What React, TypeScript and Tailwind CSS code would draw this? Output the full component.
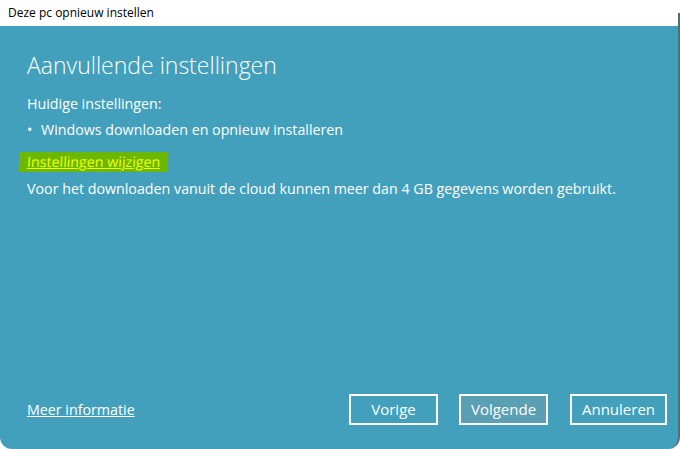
const font = { fontFamily: '"Open Sans", "Noto Sans", sans-serif' };

const Button = ({ label, width, active }: { label: string; width: string; active?: boolean }) => (
    <button
        className={`h-[31px] border-2 border-white text-[15px] text-white ${width} ${active ? "bg-[#5b9fb3]" : "bg-transparent"}`}
    >
        {label}
    </button>
);

export default function App() {
    return (
        <div className="relative h-[449px] w-[680px] overflow-hidden bg-white" style={font}>
            <div className="flex h-[26px] items-center pl-[8px] text-[12px] text-black">Deze pc opnieuw instellen</div>
            {/* thin window edge on the right */}
            <div className="absolute right-0 top-[13px] h-[13px] w-[2px] bg-[#4f6f78]" />
            <div className="flex h-[423px] w-[680px] flex-col rounded-b-[12px] border-r-2 border-[#4f6f78] bg-[#42a0bd] pb-[24px] pl-[27px] pr-[11px] text-white">
                <h1 className="mt-[23px] text-[23px] font-light leading-[32px]">Aanvullende instellingen</h1>
                <p className="mt-[13px] text-[14.25px] leading-[20px]">Huidige instellingen:</p>
                <ul className="mt-[6px] text-[14.25px] leading-[20px]">
                    <li className="flex">
                        <span className="w-[14px]">•</span>
                        <span>Windows downloaden en opnieuw installeren</span>
                    </li>
                </ul>
                <div className="mt-[9px]">
                    <a className="-ml-[8px] inline-block -skew-x-3 bg-[#6cb800] px-[8px] py-[1px] text-[14.25px] leading-[18px] text-[#f0ff00] underline">
                        Instellingen wijzigen
                    </a>
                </div>
                <p className="mt-[6px] text-[14.25px] leading-[20px]">
                    Voor het downloaden vanuit de cloud kunnen meer dan 4 GB gegevens worden gebruikt.
                </p>
                <div className="mt-auto flex items-center justify-between">
                    <a className="text-[14.25px] underline">Meer informatie</a>
                    <div className="flex">
                        <Button label="Vorige" width="w-[89px]" />
                        <div className="w-[21px]" />
                        <Button label="Volgende" width="w-[89px]" active />
                        <div className="w-[22px]" />
                        <Button label="Annuleren" width="w-[97px]" />
                    </div>
                </div>
            </div>
        </div>
    );
}
